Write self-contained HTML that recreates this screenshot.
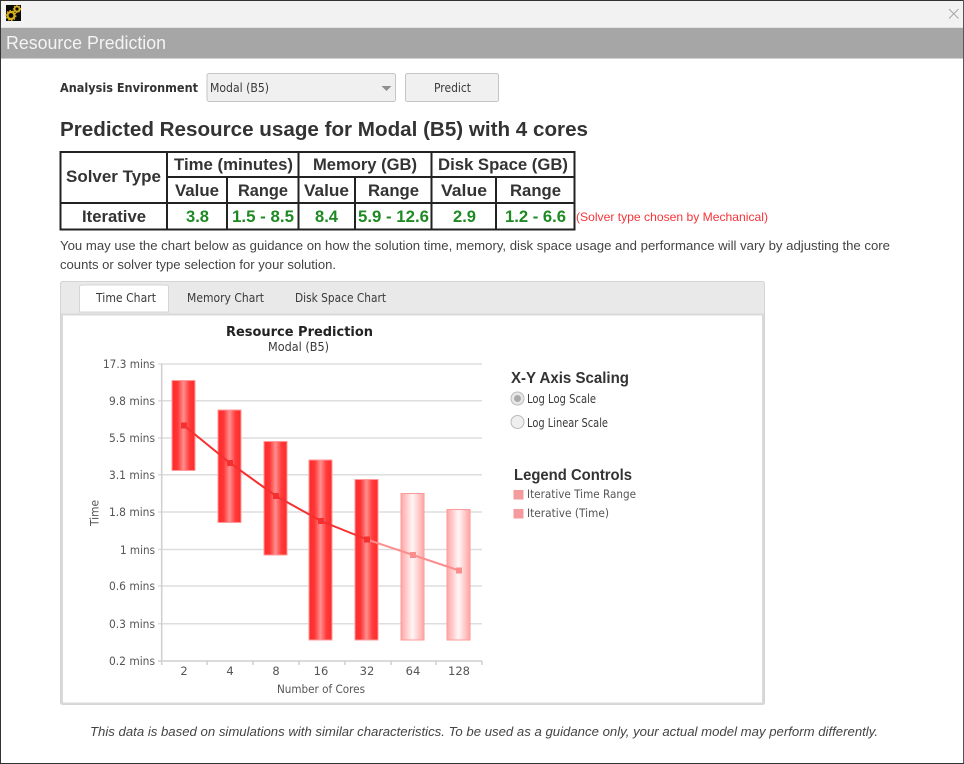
<!DOCTYPE html>
<html><head><meta charset="utf-8"><title>Resource Prediction</title>
<style>
html,body{margin:0;padding:0;background:#fff}
svg{display:block;filter:blur(.3px)}
.a{font-family:"Liberation Sans",sans-serif}
.d{font-family:"DejaVu Sans",sans-serif}
.th{font:bold 17px "Liberation Sans",sans-serif;fill:#333}
.g{font:bold 17px "Liberation Sans",sans-serif;fill:#1f8a24}
.p{font:13px "Liberation Sans",sans-serif;fill:#444}
.pi{font:italic 13px "Liberation Sans",sans-serif;fill:#444}
.s{font:12px "DejaVu Sans",sans-serif;fill:#3a3a3a}
.yl{font:11.5px "DejaVu Sans",sans-serif;fill:#555}
.gl{stroke:#ddd;stroke-width:1.5}
.tb{stroke:#222;stroke-width:2;fill:none}
</style></head><body>
<svg width="964" height="764" viewBox="0 0 964 764" xmlns="http://www.w3.org/2000/svg">
<defs>
<linearGradient id="r" x1="0" x2="1" y1="0" y2="0"><stop offset="0" stop-color="#ff2a2a"/><stop offset=".25" stop-color="#ff3636"/><stop offset=".5" stop-color="#ff9090"/><stop offset=".75" stop-color="#ff3c3c"/><stop offset="1" stop-color="#ff2a2a"/></linearGradient>
<linearGradient id="l" x1="0" x2="1" y1="0" y2="0"><stop offset="0" stop-color="#ffa4a4"/><stop offset=".5" stop-color="#fff6f6"/><stop offset="1" stop-color="#ffa4a4"/></linearGradient>
</defs>
<rect width="964" height="764" fill="#fff"/>
<rect y="1" width="964" height="26" fill="#f2f2f2"/>
<rect y="27" width="964" height="1" fill="#e4e4e4"/>
<rect y="28" width="964" height="30" fill="#a6a6a6"/>
<rect y="58" width="964" height="1" fill="#cfcfcf"/>
<rect width="964" height="1" fill="#333"/>
<rect width="1" height="764" fill="#333"/>
<rect x="963" width="1" height="764" fill="#555"/>
<rect y="763" width="964" height="1" fill="#333"/>

<rect x="6" y="5" width="15" height="16" fill="#0a0a0a"/>
<circle cx="11" cy="15.500" r="3.500" fill="#0a0a0a" stroke="#d8b01c" stroke-width="2.200"/>
<circle cx="11" cy="15.500" r="4.800" fill="none" stroke="#d8b01c" stroke-width="1.400" stroke-dasharray="1.500 1.500"/>
<circle cx="17" cy="9" r="2.500" fill="#0a0a0a" stroke="#d8b01c" stroke-width="1.800"/>
<circle cx="17" cy="9" r="3.500" fill="none" stroke="#d8b01c" stroke-width="1.200" stroke-dasharray="1.300 1.300"/>
<path d="M949 9l9.500 9.500M958.500 9l-9.500 9.500" stroke="#aaa" stroke-width="1.100" fill="none"/>

<text class="a" x="6" y="49" font-size="18.500" fill="#f4f4f4" textLength="160" lengthAdjust="spacingAndGlyphs">Resource Prediction</text>

<text class="d" x="60" y="92" font-size="12" font-weight="bold" fill="#333" textLength="138" lengthAdjust="spacingAndGlyphs">Analysis Environment</text>
<rect x="207" y="73.500" width="188.500" height="28" rx="2" fill="#f0f0f0" stroke="#c4c4c4" stroke-width="1"/>
<text class="s" x="210" y="92" textLength="59" lengthAdjust="spacingAndGlyphs">Modal (B5)</text>
<path d="M381.500 86h10l-5 5z" fill="#8f8f8f"/>
<rect x="405.500" y="73.500" width="93" height="28" rx="2" fill="#f0f0f0" stroke="#c4c4c4" stroke-width="1"/>
<text class="s" x="434" y="92" textLength="37" lengthAdjust="spacingAndGlyphs">Predict</text>

<text class="a" x="60" y="136" font-size="20" font-weight="bold" fill="#333" textLength="528" lengthAdjust="spacingAndGlyphs">Predicted Resource usage for Modal (B5) with 4 cores</text>

<rect class="tb" x="60.500" y="152" width="514" height="77.500"/>
<path class="tb" d="M167 152v77.500M298.500 152v77.500M431.500 152v77.500M227 177v52.500M355 177v52.500M496 177v52.500M167 177h407.500M60.500 203h514"/>
<text class="th" x="66" y="182" textLength="95" lengthAdjust="spacingAndGlyphs">Solver Type</text>
<text class="th" x="174" y="170" textLength="119" lengthAdjust="spacingAndGlyphs">Time (minutes)</text>
<text class="th" x="313" y="170" textLength="104" lengthAdjust="spacingAndGlyphs">Memory (GB)</text>
<text class="th" x="438" y="170" textLength="130" lengthAdjust="spacingAndGlyphs">Disk Space (GB)</text>
<text class="th" x="175" y="196" textLength="44" lengthAdjust="spacingAndGlyphs">Value</text>
<text class="th" x="238" y="196" textLength="50" lengthAdjust="spacingAndGlyphs">Range</text>
<text class="th" x="304" y="196" textLength="45" lengthAdjust="spacingAndGlyphs">Value</text>
<text class="th" x="368" y="196" textLength="51" lengthAdjust="spacingAndGlyphs">Range</text>
<text class="th" x="441" y="196" textLength="46" lengthAdjust="spacingAndGlyphs">Value</text>
<text class="th" x="510" y="196" textLength="51" lengthAdjust="spacingAndGlyphs">Range</text>
<text class="th" x="82" y="222" textLength="64" lengthAdjust="spacingAndGlyphs">Iterative</text>
<text class="g" x="186" y="222" textLength="23" lengthAdjust="spacingAndGlyphs">3.8</text>
<text class="g" x="232" y="222" textLength="62" lengthAdjust="spacingAndGlyphs">1.5 - 8.5</text>
<text class="g" x="315" y="222" textLength="23" lengthAdjust="spacingAndGlyphs">8.4</text>
<text class="g" x="358" y="222" textLength="71" lengthAdjust="spacingAndGlyphs">5.9 - 12.6</text>
<text class="g" x="453" y="222" textLength="23" lengthAdjust="spacingAndGlyphs">2.9</text>
<text class="g" x="505" y="222" textLength="61" lengthAdjust="spacingAndGlyphs">1.2 - 6.6</text>
<text class="a" x="576" y="221" font-size="12" fill="#f5343a" textLength="192" lengthAdjust="spacingAndGlyphs">(Solver type chosen by Mechanical)</text>

<text class="p" x="60" y="250" textLength="830" lengthAdjust="spacingAndGlyphs">You may use the chart below as guidance on how the solution time, memory, disk space usage and performance will vary by adjusting the core</text>
<text class="p" x="60" y="269" textLength="276" lengthAdjust="spacingAndGlyphs">counts or solver type selection for your solution.</text>

<rect x="60.500" y="281.500" width="704" height="423" rx="2" fill="#e9e9e9" stroke="#d4d4d4"/>
<rect x="62" y="314.500" width="701" height="389" fill="#fff" stroke="#d9d9d9" stroke-width="2"/>
<path d="M79.500 312v-25a2 2 0 0 1 2-2h85a2 2 0 0 1 2 2v25z" fill="#fff" stroke="#d4d4d4"/>
<text class="s" x="96" y="302" textLength="60" lengthAdjust="spacingAndGlyphs">Time Chart</text>
<text class="s" x="187" y="302" textLength="77" lengthAdjust="spacingAndGlyphs">Memory Chart</text>
<text class="s" x="295" y="302" textLength="91" lengthAdjust="spacingAndGlyphs">Disk Space Chart</text>

<text class="d" x="226" y="336" font-size="13.500" font-weight="bold" fill="#222" textLength="147" lengthAdjust="spacingAndGlyphs">Resource Prediction</text>
<text class="s" x="268" y="351" textLength="61" lengthAdjust="spacingAndGlyphs">Modal (B5)</text>

<path class="gl" d="M158 364h324M158 400.700h324M158 438h324M158 474.700h324M158 512h324M158 549.500h324M158 586h324M158 623.700h324"/>
<path d="M161.700 364v301M158 661h324M207 661v4M253 661v4M299 661v4M345 661v4M391 661v4M436 661v4M482 661v4" stroke="#cfcfcf" stroke-width="1.500" fill="none"/>

<g stroke="#ff9a9a" stroke-width="1">
<rect x="172" y="380.500" width="23" height="90" fill="url(#r)"/>
<rect x="218" y="410" width="23" height="112.500" fill="url(#r)"/>
<rect x="264" y="441.500" width="23" height="113.500" fill="url(#r)"/>
<rect x="309" y="460" width="23" height="180" fill="url(#r)"/>
<rect x="355" y="479.500" width="23" height="160.500" fill="url(#r)"/>
<rect x="401" y="493.500" width="23" height="146.500" fill="url(#l)"/>
<rect x="447" y="509.500" width="23" height="130.500" fill="url(#l)"/>
</g>
<path d="M184 425.500L230 463L276 496L321 521L367 539.500" stroke="#f53030" stroke-width="2" fill="none"/>
<path d="M367 539.500L413 555L459 570.500" stroke="#fb8d8d" stroke-width="2" fill="none"/>
<g fill="#f53030">
<rect x="181" y="422.500" width="6" height="6"/><rect x="227" y="460" width="6" height="6"/><rect x="273" y="493" width="6" height="6"/><rect x="318" y="518" width="6" height="6"/><rect x="364" y="536.500" width="6" height="6"/>
</g>
<g fill="#fb8d8d"><rect x="410" y="552" width="6" height="6"/><rect x="456" y="567.500" width="6" height="6"/></g>

<text class="yl" x="103" y="368" textLength="52" lengthAdjust="spacingAndGlyphs">17.3 mins</text>
<text class="yl" x="109" y="405" textLength="46" lengthAdjust="spacingAndGlyphs">9.8 mins</text>
<text class="yl" x="109" y="442" textLength="46" lengthAdjust="spacingAndGlyphs">5.5 mins</text>
<text class="yl" x="109" y="479" textLength="46" lengthAdjust="spacingAndGlyphs">3.1 mins</text>
<text class="yl" x="109" y="516" textLength="46" lengthAdjust="spacingAndGlyphs">1.8 mins</text>
<text class="yl" x="120" y="554" textLength="35" lengthAdjust="spacingAndGlyphs">1 mins</text>
<text class="yl" x="109" y="590" textLength="46" lengthAdjust="spacingAndGlyphs">0.6 mins</text>
<text class="yl" x="109" y="628" textLength="46" lengthAdjust="spacingAndGlyphs">0.3 mins</text>
<text class="yl" x="109" y="665" textLength="46" lengthAdjust="spacingAndGlyphs">0.2 mins</text>
<text class="yl" transform="translate(98.500 526) rotate(-90)" x="0" y="0" textLength="26" lengthAdjust="spacingAndGlyphs">Time</text>
<g class="yl" text-anchor="middle">
<text x="184" y="675">2</text><text x="230" y="675">4</text><text x="276" y="675">8</text><text x="321" y="675">16</text><text x="367" y="675">32</text><text x="413" y="675">64</text><text x="459" y="675">128</text>
</g>
<text class="yl" x="277" y="693" textLength="88" lengthAdjust="spacingAndGlyphs">Number of Cores</text>

<text class="a" x="511" y="383" font-size="16" font-weight="bold" fill="#333" textLength="118" lengthAdjust="spacingAndGlyphs">X-Y Axis Scaling</text>
<circle cx="517.500" cy="398.500" r="6.500" fill="#e8e8e8" stroke="#bbb"/>
<circle cx="517.500" cy="398.500" r="3.500" fill="#aaa"/>
<circle cx="517.500" cy="422" r="6.500" fill="#efefef" stroke="#bbb"/>
<text class="s" x="527" y="403" textLength="69" lengthAdjust="spacingAndGlyphs">Log Log Scale</text>
<text class="s" x="527" y="427" textLength="81" lengthAdjust="spacingAndGlyphs">Log Linear Scale</text>
<text class="a" x="514" y="480" font-size="16" font-weight="bold" fill="#333" textLength="118" lengthAdjust="spacingAndGlyphs">Legend Controls</text>
<rect x="513.500" y="490" width="10" height="9.500" fill="#f59a9d"/>
<rect x="513.500" y="509" width="10" height="9.500" fill="#f59a9d"/>
<text class="yl" x="527" y="498" textLength="109" lengthAdjust="spacingAndGlyphs">Iterative Time Range</text>
<text class="yl" x="527" y="517" textLength="82" lengthAdjust="spacingAndGlyphs">Iterative (Time)</text>

<text class="pi" x="90" y="736" textLength="788" lengthAdjust="spacingAndGlyphs">This data is based on simulations with similar characteristics. To be used as a guidance only, your actual model may perform differently.</text>
</svg>
</body></html>
